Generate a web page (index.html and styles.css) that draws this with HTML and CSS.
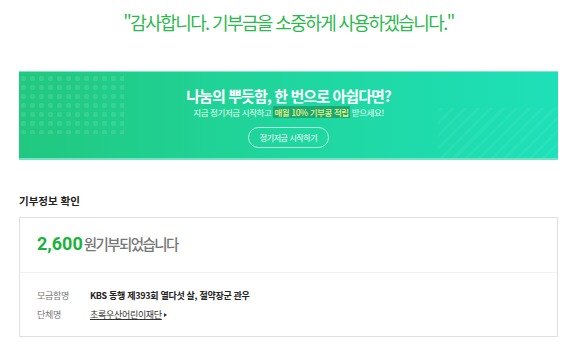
FILE: index.html
```html
<!DOCTYPE html>
<html lang="ko">
<head>
<meta charset="utf-8">
<link rel="stylesheet" href="styles.css">
</head>
<body>
<div class="page">
  <h1 class="thanks">"감사합니다. 기부금을 소중하게 사용하겠습니다."</h1>
  <div class="banner">
    <div class="dots"></div>
    <div class="stripes"></div>
    <div class="banner-inner">
      <p class="b-title">나눔의 뿌듯함, 한 번으로 아쉽다면?</p>
      <p class="b-sub">지금 정기저금 시작하고 <span class="hl">매월 10% 기부콩 적립</span> 받으세요!</p>
      <a class="b-btn">정기저금 시작하기</a>
    </div>
  </div>
  <h2 class="sec-title">기부정보 확인</h2>
  <div class="box">
    <div class="amount"><span class="num">2,600</span><span class="unit">원기부되었습니다</span></div>
    <div class="rows">
      <div class="row"><span class="lbl">모금함명</span><span class="val">KBS 동행 제393회 열다섯 살, 절약장군 관우</span></div>
      <div class="row"><span class="lbl">단체명</span><span class="val link"><u>초록우산어린이재단</u><span class="tri"></span></span></div>
    </div>
  </div>
</div>
</body>
</html>
```
FILE: styles.css
```css
* { box-sizing: border-box; }
html, body { margin: 0; padding: 0; background: #fff; }
body { font-family: "Noto Sans CJK KR", "Noto Sans", sans-serif; color: #222; }
.page { width: 580px; padding: 0 22px 0 19px; }
.thanks {
  margin: 0; padding-top: 10px; height: 71px;
  text-align: center; font-size: 18px; font-weight: 400;
  color: #2ab94a; letter-spacing: -1.6px; line-height: 24px;
}
.banner {
  position: relative; height: 89px; overflow: hidden;
  background: linear-gradient(90deg, #21c87f 0%, #1fd69e 50%, #1ee0b9 100%);
  border-top: 1px solid #7ee8c0; border-bottom: 2px solid #6fe5c6;
}
.dots {
  position: absolute; left: 0; top: 2px; width: 105px; height: 60px;
  background-image: radial-gradient(circle, rgba(255,255,255,0.1) 2.5px, transparent 3px);
  background-size: 9px 9px;
}
.stripes {
  position: absolute; right: 0; bottom: 0; width: 120px; height: 50px;
  background: repeating-linear-gradient(-45deg, rgba(255,255,255,0.05) 0 3px, transparent 3px 9px);
}
.banner-inner { position: relative; display: flex; flex-direction: column; align-items: center; padding-top: 14px; }
.b-title { margin: 0; color: #fff; font-size: 15px; font-weight: 700; letter-spacing: -0.9px; line-height: 20px; }
.b-sub { margin: 0; color: #eafff4; font-size: 8.5px; line-height: 13px; letter-spacing: -0.4px; }
.hl { color: #f6f37a; background: #1aa874; padding: 0 1px; font-weight: 500; }
.b-btn {
  margin-top: 8px; height: 21px; padding: 0 11px; border-radius: 11px;
  border: 1px solid rgba(255,255,255,0.65); color: #fff; font-size: 8px;
  line-height: 19px; letter-spacing: -0.4px;
}
.sec-title { margin: 0; padding-top: 34px; height: 57px; font-size: 10.5px; font-weight: 700; color: #222; line-height: 14px; }
.box { border: 1px solid #e0e0e0; width: 539px; }
.amount { height: 55px; padding: 15px 0 0 17px; border-bottom: 1px solid #f2f2f2; display: flex; align-items: baseline; }
.num { color: #19b23b; font-size: 18px; font-weight: 700; font-family: "Roboto", "Liberation Sans", sans-serif; letter-spacing: 0; }
.unit { color: #777; font-size: 14.5px; font-weight: 500; letter-spacing: -1.6px; margin-left: 1px; }
.rows { padding: 13px 0 12px 17px; height: 63px; }
.row { display: flex; height: 19px; align-items: center; font-size: 9px; letter-spacing: -0.3px; }
.lbl { width: 53px; color: #777; }
.val { color: #222; font-weight: 700; }
.val.link { font-weight: 400; color: #333; display: flex; align-items: center; }
.tri { display: inline-block; margin-left: 2px; border-left: 3px solid #333; border-top: 2px solid transparent; border-bottom: 2px solid transparent; }
```
